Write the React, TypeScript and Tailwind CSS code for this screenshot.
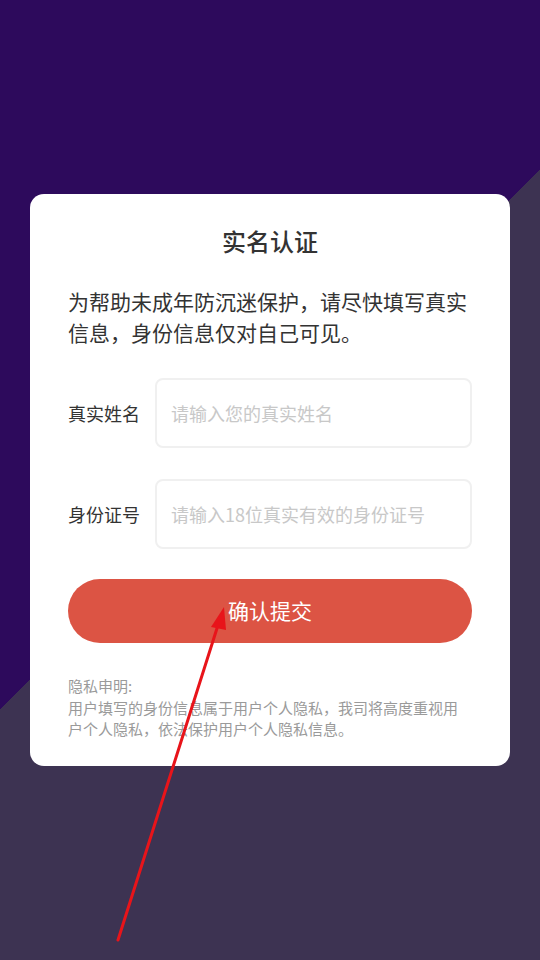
export default function App() {
  const font = { fontFamily: '"Noto Sans CJK SC", "Noto Sans", sans-serif' };

  return (
    <div
      className="relative w-full h-[960px] overflow-hidden bg-[linear-gradient(135deg,#2d0a5c_47.3%,#3d3352_47.3%)] pt-[194px] px-[30px]"
      style={font}
    >
      {/* Card */}
      <div className="bg-white rounded-[14px] h-[572px] px-[38px] pt-[32px]">
        <h1 className="text-center text-[24px] leading-[30px] font-medium text-[#333]">实名认证</h1>
        <p className="mt-[30px] text-[21px] leading-[31px] text-[#333]">
          为帮助未成年防沉迷保护，请尽快填写真实信息，身份信息仅对自己可见。
        </p>

        <div className="mt-[30px] flex flex-col gap-[31px]">
          <div className="flex items-center">
            <span className="w-[87px] text-[18px] text-[#333] shrink-0">真实姓名</span>
            <div className="flex-1 h-[70px] border-2 border-[#f0f0f0] rounded-[8px] flex items-center px-[14px]">
              <input
                className="w-full outline-none text-[18px] text-[#333] placeholder:text-[#c8c8c8] bg-transparent"
                placeholder="请输入您的真实姓名"
                style={font}
              />
            </div>
          </div>
          <div className="flex items-center">
            <span className="w-[87px] text-[18px] text-[#333] shrink-0">身份证号</span>
            <div className="flex-1 h-[70px] border-2 border-[#f0f0f0] rounded-[8px] flex items-center px-[14px]">
              <input
                className="w-full outline-none text-[18px] text-[#333] placeholder:text-[#c8c8c8] bg-transparent"
                placeholder="请输入18位真实有效的身份证号"
                style={font}
              />
            </div>
          </div>
        </div>

        <button className="mt-[30px] w-full h-[64px] rounded-full bg-[#dc5444] text-white text-[21px]">
          确认提交
        </button>

        <div className="mt-[32px] text-[15px] leading-[21.5px] text-[#9a9a9a]">
          <p>隐私申明:</p>
          <p>用户填写的身份信息属于用户个人隐私，我司将高度重视用户个人隐私，依法保护用户个人隐私信息。</p>
        </div>
      </div>

      {/* Annotation arrow */}
      <svg className="absolute inset-0 pointer-events-none" width="540" height="960" viewBox="0 0 540 960">
        <line x1="118" y1="940" x2="219" y2="622" stroke="#e8141a" strokeWidth="3" strokeLinecap="round" />
        <polygon points="224,607 211,627 226,630" fill="#e8141a" />
      </svg>
    </div>
  );
}
